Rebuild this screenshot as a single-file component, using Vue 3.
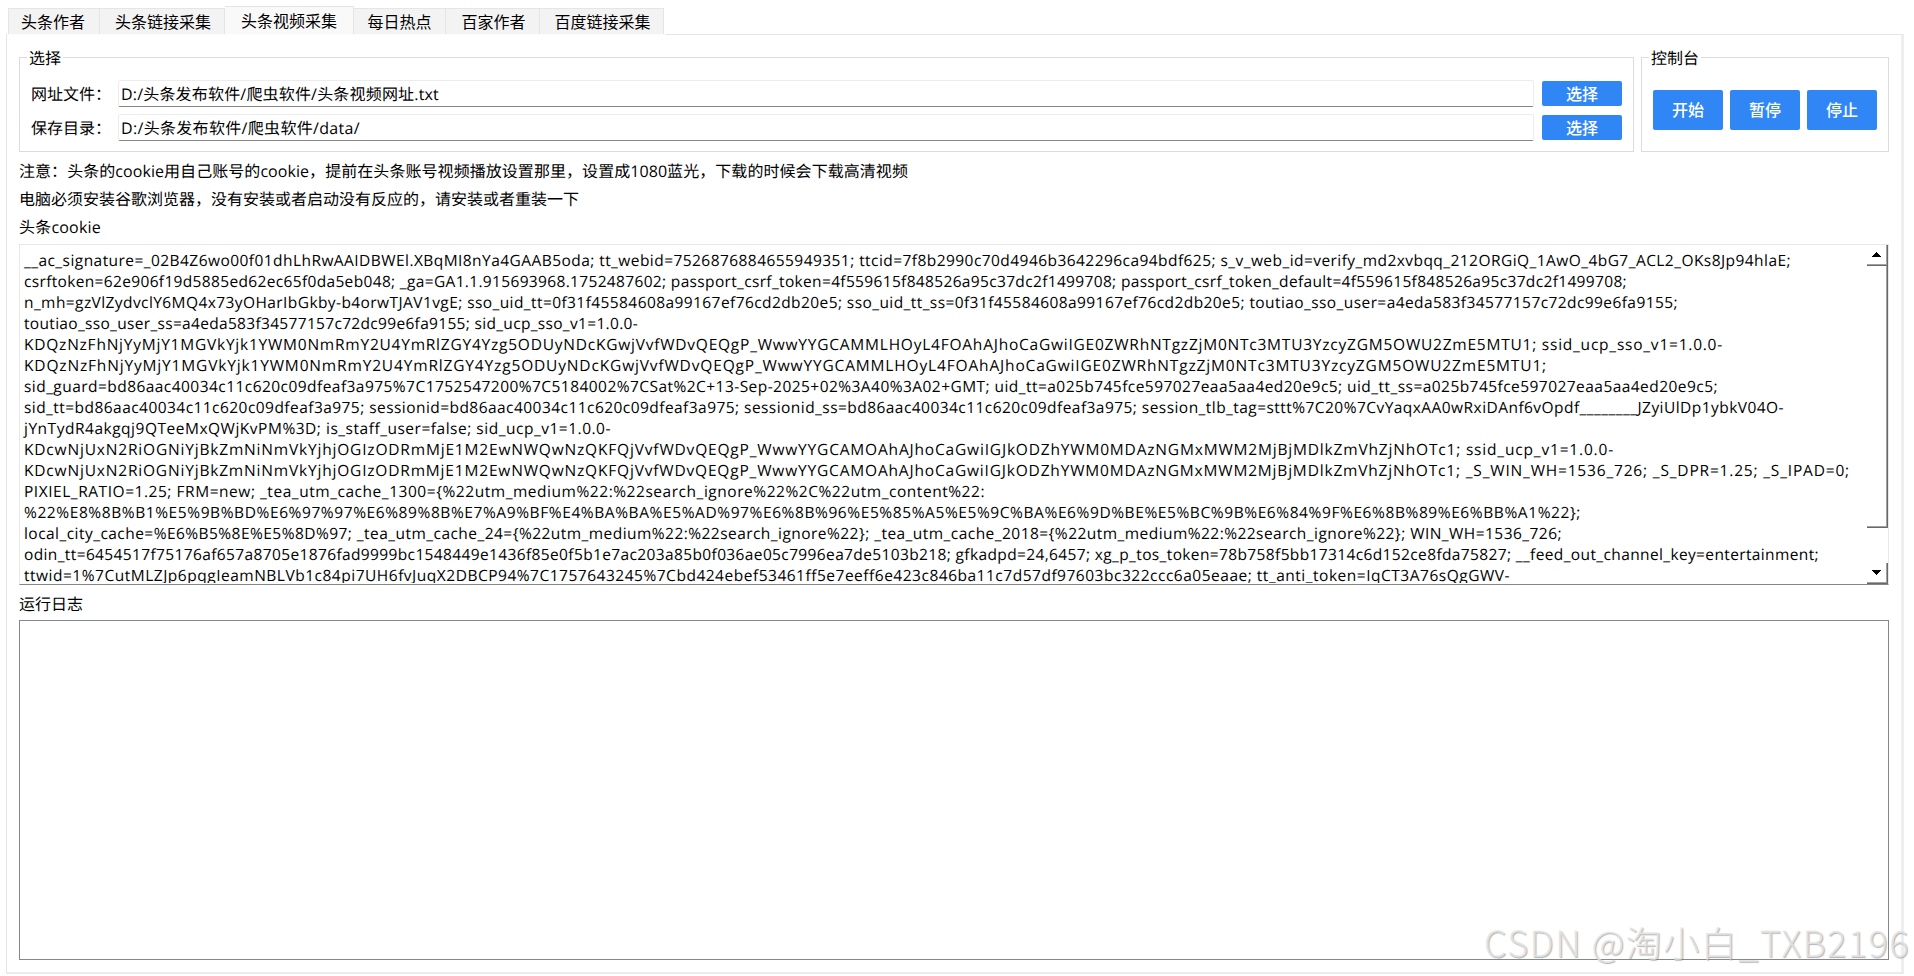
<template>
  <div class="window">
    <div class="tab-bar" role="tablist">
      <button
        v-for="(tab, i) in tabs"
        :key="tab"
        class="tab"
        :class="[`tab-${i + 1}`, { active: tab === activeTab }]"
        role="tab"
        @click="activeTab = tab"
      >
        {{ tab }}
      </button>
    </div>

    <div class="pane">
      <div class="top-row">
        <fieldset class="group group-files">
          <legend>选择</legend>
          <div v-for="row in fileRows" :key="row.label" class="file-row">
            <label>{{ row.label }}</label>
            <div class="line-edit"><span class="fit" :data-width="row.width">{{ row.path }}</span></div>
            <button class="btn btn-choose">选择</button>
          </div>
        </fieldset>

        <fieldset class="group group-control">
          <legend>控制台</legend>
          <div class="control-row">
            <button v-for="name in controls" :key="name" class="btn btn-control">{{ name }}</button>
          </div>
        </fieldset>
      </div>

      <p class="note"><span class="fit" data-width="889">注意：头条的cookie用自己账号的cookie，提前在头条账号视频播放设置那里，设置成1080蓝光，下载的时候会下载高清视频</span></p>
      <p class="note">电脑必须安装谷歌浏览器，没有安装或者启动没有反应的，请安装或者重装一下</p>
      <p class="note"><span class="fit" data-width="82">头条cookie</span></p>

      <div class="cookie-box">
        <div class="cookie-text">
          <div v-for="(line, i) in cookieLines" :key="i" class="cookie-line">
            <span class="fit" :data-width="line.width">{{ line.text }}</span>
          </div>
        </div>
        <div class="scrollbar">
          <div class="scroll-btn">
            <svg width="9" height="5" viewBox="0 0 9 5" shape-rendering="crispEdges"><path d="M4 0h1v1h1v1h1v1h1v1h1v1H0V4h1V3h1V2h1V1h1z" /></svg>
          </div>
          <div class="scroll-thumb"></div>
          <div class="scroll-track"></div>
          <div class="scroll-btn">
            <svg width="9" height="5" viewBox="0 0 9 5" shape-rendering="crispEdges"><path d="M0 0h9v1H8v1H7v1H6v1H5v1H4V4H3V3H2V2H1V1H0z" /></svg>
          </div>
        </div>
      </div>

      <p class="log-label">运行日志</p>
      <div class="log-box"></div>
    </div>

    <div class="watermark"><span class="fit" data-width="426">CSDN @淘小白_TXB2196</span></div>
  </div>
</template>

<script setup>
import { ref, onMounted } from 'vue'

const tabs = ['头条作者', '头条链接采集', '头条视频采集', '每日热点', '百家作者', '百度链接采集']
const activeTab = ref('头条视频采集')

const fileRows = [
  { label: '网址文件：', path: 'D:/头条发布软件/爬虫软件/头条视频网址.txt', width: 318 },
  { label: '保存目录：', path: 'D:/头条发布软件/爬虫软件/data/', width: 239 }
]

const controls = ['开始', '暂停', '停止']

const cookieLines = [
  { text: '__ac_signature=_02B4Z6wo00f01dhLhRwAAIDBWEl.XBqMI8nYa4GAAB5oda; tt_webid=7526876884655949351; ttcid=7f8b2990c70d4946b3642296ca94bdf625; s_v_web_id=verify_md2xvbqq_212ORGiQ_1AwO_4bG7_ACL2_OKs8Jp94hlaE;', width: 1767 },
  { text: 'csrftoken=62e906f19d5885ed62ec65f0da5eb048; _ga=GA1.1.915693968.1752487602; passport_csrf_token=4f559615f848526a95c37dc2f1499708; passport_csrf_token_default=4f559615f848526a95c37dc2f1499708;', width: 1603 },
  { text: 'n_mh=gzVlZydvclY6MQ4x73yOHarIbGkby-b4orwTJAV1vgE; sso_uid_tt=0f31f45584608a99167ef76cd2db20e5; sso_uid_tt_ss=0f31f45584608a99167ef76cd2db20e5; toutiao_sso_user=a4eda583f34577157c72dc99e6fa9155;', width: 1654 },
  { text: 'toutiao_sso_user_ss=a4eda583f34577157c72dc99e6fa9155; sid_ucp_sso_v1=1.0.0-', width: 614 },
  { text: 'KDQzNzFhNjYyMjY1MGVkYjk1YWM0NmRmY2U4YmRlZGY4Yzg5ODUyNDcKGwjVvfWDvQEQgP_WwwYYGCAMMLHOyL4FOAhAJhoCaGwiIGE0ZWRhNTgzZjM0NTc3MTU3YzcyZGM5OWU2ZmE5MTU1; ssid_ucp_sso_v1=1.0.0-', width: 1699 },
  { text: 'KDQzNzFhNjYyMjY1MGVkYjk1YWM0NmRmY2U4YmRlZGY4Yzg5ODUyNDcKGwjVvfWDvQEQgP_WwwYYGCAMMLHOyL4FOAhAJhoCaGwiIGE0ZWRhNTgzZjM0NTc3MTU3YzcyZGM5OWU2ZmE5MTU1;', width: 1523 },
  { text: 'sid_guard=bd86aac40034c11c620c09dfeaf3a975%7C1752547200%7C5184002%7CSat%2C+13-Sep-2025+02%3A40%3A02+GMT; uid_tt=a025b745fce597027eaa5aa4ed20e9c5; uid_tt_ss=a025b745fce597027eaa5aa4ed20e9c5;', width: 1694 },
  { text: 'sid_tt=bd86aac40034c11c620c09dfeaf3a975; sessionid=bd86aac40034c11c620c09dfeaf3a975; sessionid_ss=bd86aac40034c11c620c09dfeaf3a975; session_tlb_tag=sttt%7C20%7CvYaqxAA0wRxiDAnf6vOpdf________JZyiUlDp1ybkV04O-', width: 1760 },
  { text: 'jYnTydR4akgqj9QTeeMxQWjKvPM%3D; is_staff_user=false; sid_ucp_v1=1.0.0-', width: 587 },
  { text: 'KDcwNjUxN2RiOGNiYjBkZmNiNmVkYjhjOGIzODRmMjE1M2EwNWQwNzQKFQjVvfWDvQEQgP_WwwYYGCAMOAhAJhoCaGwiIGJkODZhYWM0MDAzNGMxMWM2MjBjMDlkZmVhZjNhOTc1; ssid_ucp_v1=1.0.0-', width: 1590 },
  { text: 'KDcwNjUxN2RiOGNiYjBkZmNiNmVkYjhjOGIzODRmMjE1M2EwNWQwNzQKFQjVvfWDvQEQgP_WwwYYGCAMOAhAJhoCaGwiIGJkODZhYWM0MDAzNGMxMWM2MjBjMDlkZmVhZjNhOTc1; _S_WIN_WH=1536_726; _S_DPR=1.25; _S_IPAD=0;', width: 1826 },
  { text: 'PIXIEL_RATIO=1.25; FRM=new; _tea_utm_cache_1300={%22utm_medium%22:%22search_ignore%22%2C%22utm_content%22:', width: 961 },
  { text: '%22%E8%8B%B1%E5%9B%BD%E6%97%97%E6%89%8B%E7%A9%BF%E4%BA%BA%E5%AD%97%E6%8B%96%E5%85%A5%E5%9C%BA%E6%9D%BE%E5%BC%9B%E6%84%9F%E6%8B%89%E6%BB%A1%22};', width: 1557 },
  { text: 'local_city_cache=%E6%B5%8E%E5%8D%97; _tea_utm_cache_24={%22utm_medium%22:%22search_ignore%22}; _tea_utm_cache_2018={%22utm_medium%22:%22search_ignore%22}; WIN_WH=1536_726;', width: 1538 },
  { text: 'odin_tt=6454517f75176af657a8705e1876fad9999bc1548449e1436f85e0f5b1e7ac203a85b0f036ae05c7996ea7de5103b218; gfkadpd=24,6457; xg_p_tos_token=78b758f5bb17314c6d152ce8fda75827; __feed_out_channel_key=entertainment;', width: 1795 },
  { text: 'ttwid=1%7CutMLZJp6pqgIeamNBLVb1c84pi7UH6fvJuqX2DBCP94%7C1757643245%7Cbd424ebef53461ff5e7eeff6e423c846ba11c7d57df97603bc322ccc6a05eaae; tt_anti_token=IqCT3A76sQgGWV-', width: 1486 }
]

// 按目标宽度微调字间距
const fitText = () => {
  document.querySelectorAll('.fit').forEach((el) => {
    const diff = Number(el.dataset.width) - el.getBoundingClientRect().width
    el.style.letterSpacing = `${diff / el.textContent.length}px`
  })
}

onMounted(fitText)
</script>

<style>
body {
  margin: 0;
  background: #fff;
  overflow: hidden;
}
</style>

<style scoped>
.window {
  position: relative;
  box-sizing: border-box;
  width: 1914px;
  height: 976px;
  padding: 6px 10px 0 6px;
  overflow: hidden;
  background: #fff;
  color: #000;
  font-family: "Open Sans", "Noto Sans CJK SC", sans-serif;
  font-size: 16px;
  line-height: 21px;
  text-rendering: geometricPrecision;
}

.fit {
  display: inline-block;
  white-space: pre;
}

.tab-bar {
  display: flex;
  align-items: flex-end;
  height: 28px;
  padding-left: 2px;
}

.tab {
  box-sizing: border-box;
  height: 26px;
  padding: 1px 0 0;
  border: 1px solid #e5e5e5;
  border-left: 0;
  border-bottom: 0;
  background: #f3f3f3;
  color: #000;
  font: inherit;
  white-space: nowrap;
}

.tab-1 {
  width: 92px;
  padding-right: 2px;
  border-left: 1px solid #e5e5e5;
}

.tab-2 {
  width: 125px;
  padding-left: 2px;
}

.tab-3 {
  width: 129px;
}

.tab-4 {
  width: 92px;
}

.tab-5 {
  width: 94px;
  padding-left: 2px;
}

.tab-6 {
  width: 124px;
  padding-left: 2px;
}

.tab.active {
  height: 28px;
  background: #f9f9f9;
}

.pane {
  box-sizing: border-box;
  width: 1898px;
  height: 940px;
  padding: 12px 12px 0;
  border: 1px solid #e5e5e5;
  border-right: 3px solid #eee;
  border-bottom: 2px solid #ebebeb;
}

/* 标签下方与内容区相连，不显示上边线 */
.pane::before {
  content: "";
  position: absolute;
  top: 34px;
  left: 7px;
  width: 659px;
  height: 1px;
  background: #fcfcfc;
}

.top-row {
  display: flex;
  gap: 7px;
  width: 1870px;
}

.group {
  box-sizing: border-box;
  height: 105px;
  margin: 0;
  padding: 0;
  border: 1px solid #dcdcdc;
  min-width: 0;
}

.group legend {
  height: 21px;
  margin-left: 7px;
  padding: 0 2px;
  line-height: 23px;
}

.group-files {
  width: 1615px;
}

.group-control {
  width: 248px;
}

.file-row {
  display: flex;
  align-items: center;
  height: 27px;
  margin: 12px 11px 0;
}

.file-row + .file-row {
  margin-top: 7px;
}

.file-row label {
  width: 87px;
  padding-top: 2px;
  white-space: nowrap;
}

.line-edit {
  box-sizing: border-box;
  flex: 1;
  height: 27px;
  padding: 3px 2px 0;
  border: 1px solid #ececec;
  border-bottom-color: #868686;
  border-radius: 2px;
}

.btn {
  padding: 0;
  border: 0;
  border-radius: 2px;
  background: #3086f4;
  color: #fff;
  font: inherit;
  font-weight: 500;
}

.btn-choose {
  width: 80px;
  height: 25px;
  margin-left: 8px;
  padding-top: 1px;
}

.control-row {
  display: flex;
  gap: 7px;
  margin: 22px 0 0 11px;
}

.btn-control {
  width: 70px;
  height: 40px;
}

.note {
  height: 28px;
  margin: 0;
  line-height: 28px;
  white-space: nowrap;
}

.top-row + .note {
  margin-top: 5px;
}

.cookie-box {
  box-sizing: border-box;
  display: flex;
  width: 1870px;
  height: 341px;
  margin-top: 3px;
  border: 1px solid #e8e8e8;
  border-bottom-color: #868686;
}

.cookie-text {
  flex: 1;
  height: 338px;
  padding: 5px 0 0 4px;
  box-sizing: border-box;
  overflow: hidden;
  font-size: 15.5px;
}

.cookie-line {
  height: 21px;
}

.scrollbar {
  display: flex;
  flex-direction: column;
  width: 21px;
}

.scroll-btn,
.scroll-thumb {
  box-sizing: border-box;
  border-right: 1px solid #696969;
  border-bottom: 1px solid #696969;
  box-shadow: inset -1px -1px 0 #a0a0a0;
}

.scroll-btn {
  display: flex;
  align-items: center;
  justify-content: center;
  height: 21px;
  padding: 0 2px 2px 0;
}

.scroll-thumb {
  height: 262px;
}

.scroll-track {
  flex: 1;
}

.log-label {
  height: 35px;
  margin: 0;
  line-height: 38px;
}

.log-box {
  box-sizing: border-box;
  width: 1870px;
  height: 340px;
  border: 1px solid #828790;
}

/* 水印叠加在窗口右下角 */
.watermark {
  position: absolute;
  left: 1484px;
  bottom: 10px;
  font-family: "Noto Sans CJK SC", sans-serif;
  font-weight: 300;
  font-size: 36px;
  line-height: 48px;
  color: rgba(228, 228, 228, 0.9);
  text-shadow: 1px 1px 1px rgba(130, 130, 130, 0.6);
}
</style>
